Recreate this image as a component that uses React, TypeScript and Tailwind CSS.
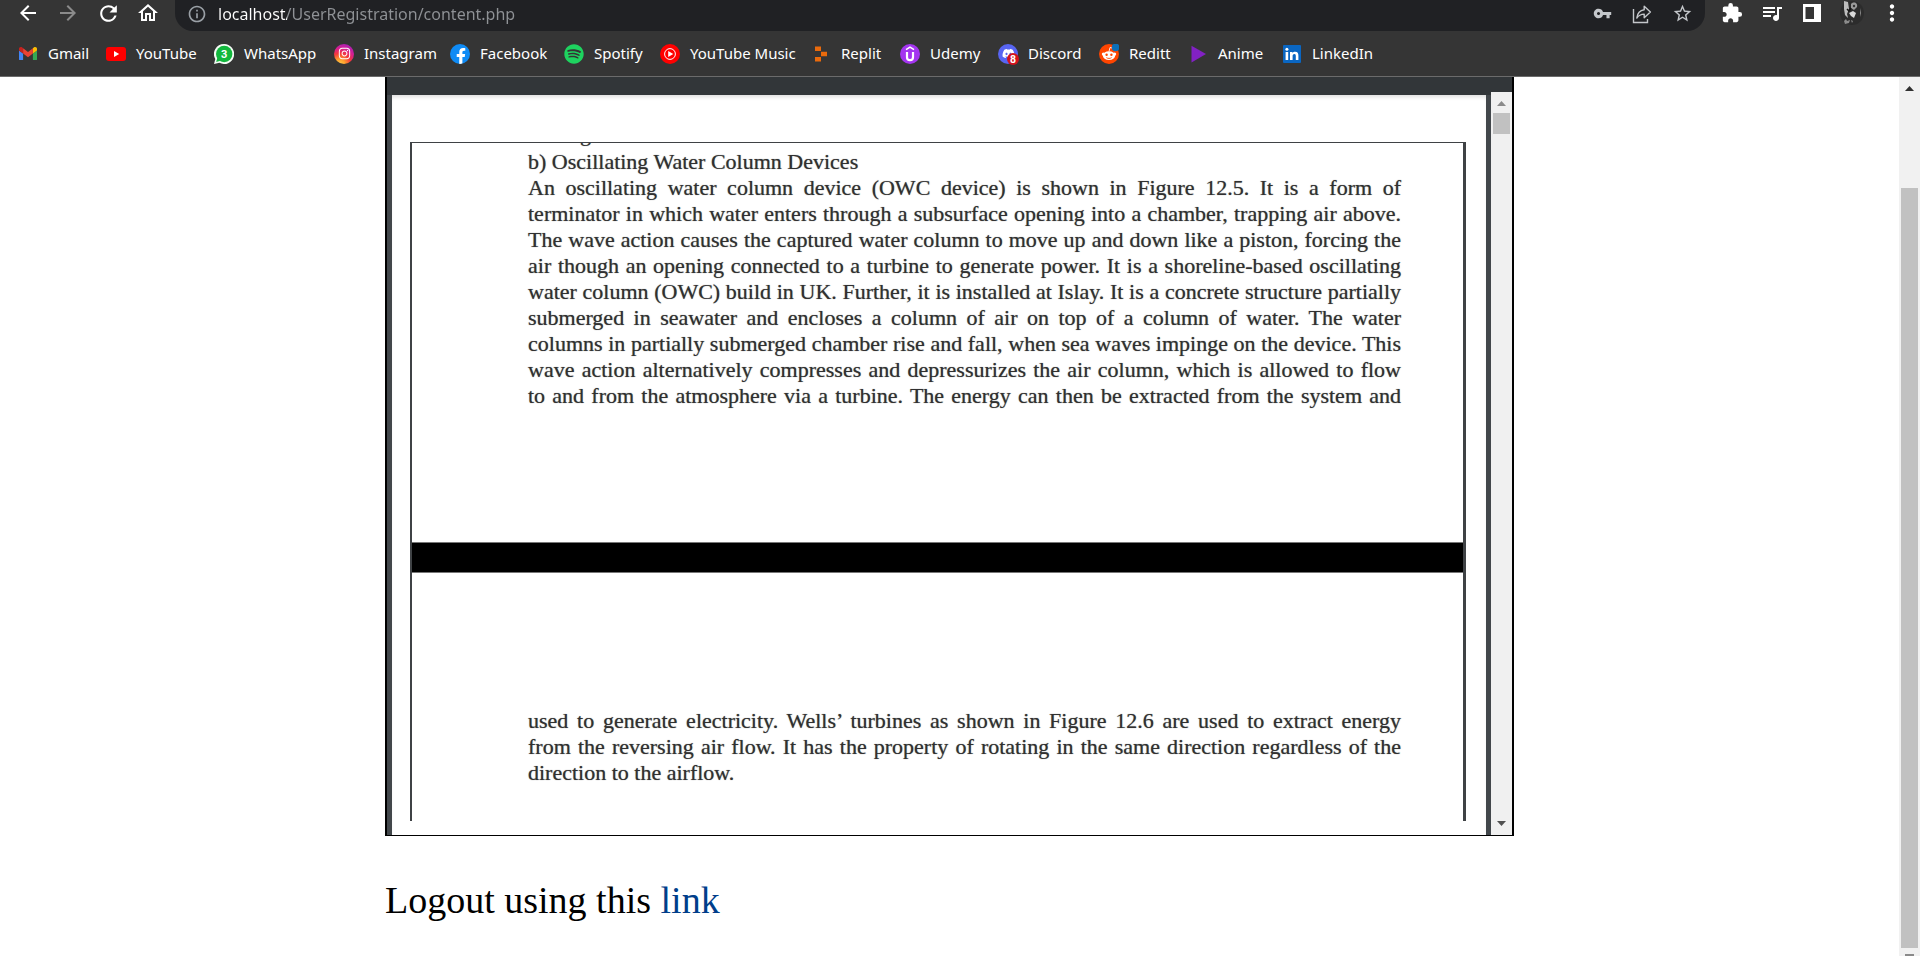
import React from "react";
import {
  MdArrowBack,
  MdArrowForward,
  MdRefresh,
  MdOutlineHome,
  MdInfoOutline,
  MdVpnKey,
  MdStarBorder,
  MdExtension,
  MdQueueMusic,
  MdMoreVert,
} from "react-icons/md";
import { FaSpotify, FaInstagram, FaDiscord, FaFacebookF } from "react-icons/fa";

const GmailIcon = () => (
  <svg viewBox="52 42 88 66" className="w-[18px]">
    <path fill="#4285f4" d="M58 108h14V74L52 59v43c0 3.32 2.69 6 6 6" />
    <path fill="#34a853" d="M120 108h14c3.32 0 6-2.69 6-6V59l-20 15" />
    <path fill="#fbbc04" d="M120 48v26l20-15v-8c0-7.42-8.47-11.65-14.4-7.2" />
    <path fill="#ea4335" d="M72 74V48l24 18 24-18v26L96 92" />
    <path fill="#c5221f" d="M52 51v8l20 15V48l-5.6-4.2c-5.94-4.45-14.4-.22-14.4 7.2" />
  </svg>
);

const YouTubeIcon = () => (
  <svg viewBox="0 0 20 20" className="size-5">
    <rect y="3" width="20" height="14" rx="3" fill="#f00" />
    <path d="M8 7l5.2 3L8 13z" fill="#fff" />
  </svg>
);

const WhatsAppIcon = () => (
  <svg viewBox="0 0 20 20" className="size-5">
    <path d="M10 0a10 10 0 1 1-4.6 18.8L0 20l1.3-5A10 10 0 0 1 10 0z" fill="#f4fbf5" />
    <circle cx="10.2" cy="10" r="8.2" fill="#12b83d" />
    <path d="M2.2 17.9l1.2-4.4 3 3.2z" fill="#12b83d" />
    <text x="10.2" y="14" textAnchor="middle" fontSize="11" fontWeight="700" fill="#fff" fontFamily="Roboto, sans-serif">3</text>
  </svg>
);

const InstagramIcon = () => (
  <span className="flex size-5 items-center justify-center rounded-full bg-[radial-gradient(circle_at_28%_105%,#ffd34e_0%,#fda02d_22%,#f4383c_45%,#d81f8f_65%,#8a1fd0_100%)] text-white">
    <FaInstagram size={13} />
  </span>
);

const FacebookIcon = () => (
  <span className="flex size-5 items-end justify-center overflow-hidden rounded-full bg-[#0f8bf5] pl-px text-white">
    <FaFacebookF size={16} />
  </span>
);

const SpotifyIcon = () => <FaSpotify size={20} color="#1ed35f" />;

const YouTubeMusicIcon = () => (
  <svg viewBox="0 0 20 20" className="size-5">
    <circle cx="10" cy="10" r="10" fill="#f00" />
    <circle cx="10" cy="10" r="5.4" fill="none" stroke="#fff" strokeWidth="1" />
    <path d="M8.2 7l5 3-5 3z" fill="#fff" />
  </svg>
);

const ReplitIcon = () => (
  <svg viewBox="0 0 20 20" className="size-5">
    <path d="M4 2.5h6v4.6H4zM10 7.7h6v4.6h-6zM4 12.9h6v4.6H4z" fill="#ea6a0c" />
  </svg>
);

const UdemyIcon = () => (
  <svg viewBox="0 0 20 20" className="size-5">
    <circle cx="10" cy="10" r="10" fill="#a435f0" />
    <path d="M6 5.6l4-2.5 4 2.5" fill="none" stroke="#fff" strokeWidth="1.5" />
    <path d="M7 8v5.200a3 3 0 0 0 6 0V8" fill="none" stroke="#fff" strokeWidth="2.200" />
  </svg>
);

const DiscordIcon = () => (
  <span className="relative flex size-5 items-center justify-center rounded-full bg-[#5865f2] text-white">
    <FaDiscord size={13} />
    <svg viewBox="0 0 12 12" className="absolute -right-px -bottom-px size-3">
      <circle cx="6" cy="6" r="6" fill="#d3121c" />
      <text x="6" y="9.800" textAnchor="middle" fontSize="10.500" fontWeight="700" fill="#fff" fontFamily="Roboto, sans-serif">8</text>
    </svg>
  </span>
);

const RedditIcon = () => (
  <svg viewBox="0 0 20 20" className="size-5">
    <circle cx="10" cy="10" r="10" fill="#ff4500" />
    <circle cx="4.300" cy="10" r="1.500" fill="#fff" />
    <circle cx="15.700" cy="10" r="1.500" fill="#fff" />
    <ellipse cx="10" cy="11.600" rx="6.200" ry="4.300" fill="#fff" />
    <path d="M10 7.500l1-4 3 .7" fill="none" stroke="#fff" strokeWidth="0.900" />
    <circle cx="7.600" cy="10.800" r="1.200" fill="#ff4500" />
    <circle cx="12.400" cy="10.800" r="1.200" fill="#ff4500" />
    <path d="M7.400 13.600c1.400 1.100 3.800 1.100 5.200 0" fill="none" stroke="#ff4500" strokeWidth="0.900" />
    <circle cx="16.600" cy="3.400" r="3.800" fill="#0c6fb8" />
  </svg>
);

const AnimeIcon = () => (
  <svg viewBox="0 0 20 20" className="size-5">
    <path d="M3.500 1.800L18 10 3.500 18.400z" fill="#8221c4" />
  </svg>
);

const LinkedInIcon = () => (
  <svg viewBox="0 0 20 20" className="size-5">
    <rect x="1" y="1" width="18" height="18" rx="1" fill="#0a66c2" />
    <path d="M3.600 8h2.600v8H3.600zM8 8h2.500v1.200c.5-.9 1.500-1.400 2.700-1.400 2.400 0 3.200 1.500 3.200 3.800V16h-2.600v-4c0-1.200-.3-2-1.400-2s-1.800.8-1.800 2v4H8z" fill="#fff" />
    <circle cx="4.900" cy="5.300" r="1.500" fill="#fff" />
  </svg>
);

const ShareIcon = () => (
  <svg viewBox="0 0 20 20" className="size-5" fill="none" stroke="currentColor" strokeWidth="1.400">
    <path d="M1.500 5v13.500h14V15" />
    <path d="M12.200 2.200v3.600C7.500 6.500 5.400 9.500 4.800 14c1.700-2.600 4-3.800 7.400-3.900v3.600L18.400 8z" strokeLinejoin="round" />
  </svg>
);

const PanelIcon = () => (
  <svg viewBox="0 0 18 18" className="size-[18px]" fill="currentColor">
    <path fillRule="evenodd" d="M0 0h18v18H0zM2.500 3v12H11V3z" />
  </svg>
);

const Avatar = () => (
  <svg viewBox="0 0 24 24" className="size-6">
    <circle cx="12" cy="12" r="12" fill="#2c2c2c" />
    <path d="M4 0l4 1 1 7-2 5 1 4-3-3-1-6z" fill="#bdbdbd" />
    <path d="M11 3c3-3 7-1 6 3l-3 3-3-2z" fill="#9a9a9a" />
    <circle cx="14" cy="5" r="1.200" fill="#333" />
    <path d="M9 12l4-2 3 2-2 5-3-2z" fill="#d8d8d8" />
    <path d="M4 20l2-2 1 2 3-1-1 3-4 1zM11 19l2 1-1 2zM20 7l1 5-1 4z" fill="#8c8c8c" />
    <path d="M7 8l2 2 2-3" stroke="#151515" strokeWidth="1.500" fill="none" />
  </svg>
);

const bookmarks: { label: string; Icon: () => React.ReactElement; width: string }[] = [
  { label: "Gmail", Icon: GmailIcon, width: "w-[88px]" },
  { label: "YouTube", Icon: YouTubeIcon, width: "w-[108px]" },
  { label: "WhatsApp", Icon: WhatsAppIcon, width: "w-[120px]" },
  { label: "Instagram", Icon: InstagramIcon, width: "w-[116px]" },
  { label: "Facebook", Icon: FacebookIcon, width: "w-[114px]" },
  { label: "Spotify", Icon: SpotifyIcon, width: "w-[96px]" },
  { label: "YouTube Music", Icon: YouTubeMusicIcon, width: "w-[151px]" },
  { label: "Replit", Icon: ReplitIcon, width: "w-[89px]" },
  { label: "Udemy", Icon: UdemyIcon, width: "w-[98px]" },
  { label: "Discord", Icon: DiscordIcon, width: "w-[101px]" },
  { label: "Reditt", Icon: RedditIcon, width: "w-[89px]" },
  { label: "Anime", Icon: AnimeIcon, width: "w-[94px]" },
  { label: "LinkedIn", Icon: LinkedInIcon, width: "w-[100px]" },
];

const firstPage = [
  "An oscillating water column device (OWC device) is shown in Figure 12.5. It is a form of",
  "terminator in which water enters through a subsurface opening into a chamber, trapping air above.",
  "The wave action causes the captured water column to move up and down like a piston, forcing the",
  "air though an opening connected to a turbine to generate power. It is a shoreline-based oscillating",
  "water column (OWC) build in UK. Further, it is installed at Islay. It is a concrete structure partially",
  "submerged in seawater and encloses a column of air on top of a column of water. The water",
  "columns in partially submerged chamber rise and fall, when sea waves impinge on the device. This",
  "wave action alternatively compresses and depressurizes the air column, which is allowed to flow",
  "to and from the atmosphere via a turbine. The energy can then be extracted from the system and",
];

const secondPage = [
  "used to generate electricity. Wells’ turbines as shown in Figure 12.6 are used to extract energy",
  "from the reversing air flow. It has the property of rotating in the same direction regardless of the",
];

function ToolButton({ label, className = "", children }: { label: string; className?: string; children: React.ReactNode }) {
  return (
    <button type="button" aria-label={label} className={`flex size-10 shrink-0 items-center justify-center ${className}`}>
      {children}
    </button>
  );
}

function Toolbar() {
  return (
    <header className="shrink-0 border-b border-[#6b6b6b] bg-[#353535] font-['Noto_Sans','Open_Sans',sans-serif] text-white">
      <div className="flex h-[31px] items-start overflow-hidden pl-2">
        <nav aria-label="Navigation" className="-mt-[7px] flex">
          <ToolButton label="Back"><MdArrowBack size={24} /></ToolButton>
          <ToolButton label="Forward" className="text-[#8b8b8b]"><MdArrowForward size={24} /></ToolButton>
          <ToolButton label="Reload"><MdRefresh size={25} /></ToolButton>
          <ToolButton label="Home"><MdOutlineHome size={24} /></ToolButton>
        </nav>
        <div className="-mt-1 ml-[7px] flex h-[35px] flex-1 items-center rounded-b-[18px] bg-[#202124] pl-3 text-[#9aa0a6]">
          <MdInfoOutline size={20} className="shrink-0" />
          <input
            aria-label="Address"
            defaultValue="localhost/UserRegistration/content.php"
            className="ml-[11px] min-w-0 flex-1 bg-[linear-gradient(90deg,#ffffff_69px,#8f9296_69px)] bg-clip-text text-base text-transparent outline-none"
          />
          <div className="flex shrink-0 items-center pr-[3px] text-[#c4c7cb]">
            <ToolButton label="Passwords"><MdVpnKey size={19} /></ToolButton>
            <ToolButton label="Share"><ShareIcon /></ToolButton>
            <ToolButton label="Bookmark this page"><MdStarBorder size={21} /></ToolButton>
          </div>
        </div>
        <div className="-mt-[7px] flex pr-2 pl-[7px]">
          <ToolButton label="Extensions"><MdExtension size={22} /></ToolButton>
          <ToolButton label="Media"><MdQueueMusic size={24} /></ToolButton>
          <ToolButton label="Side panel"><PanelIcon /></ToolButton>
          <ToolButton label="Profile"><Avatar /></ToolButton>
          <ToolButton label="Menu"><MdMoreVert size={26} /></ToolButton>
        </div>
      </div>
      <nav aria-label="Bookmarks" className="flex h-[45px] items-center pl-[18px]">
        {bookmarks.map(({ label, Icon, width }) => (
          <a key={label} href="#" className={`flex h-9 shrink-0 items-center gap-[10px] text-[15px] whitespace-nowrap ${width}`}>
            <span className="flex w-5 shrink-0 justify-center"><Icon /></span>
            {label}
          </a>
        ))}
      </nav>
    </header>
  );
}

function Arrow({ down = false, className }: { down?: boolean; className: string }) {
  return (
    <svg viewBox="0 0 9 5" className={`h-[5px] w-[9px] ${className}`} fill="currentColor">
      <path d={down ? "M0 0h9L4.500 5z" : "M0 5h9L4.500 0z"} />
    </svg>
  );
}

function DocumentViewer() {
  return (
    <section
      aria-label="Document"
      className="flex flex-col border-x-2 border-b border-black bg-[#42474b]"
    >
      <div className="h-[15px] bg-[#323639]" />
      <div className="flex">
        <div className="flex-1 border-t-[3px] border-[#323639] pr-[5px] pl-[5px]">
          <article className="bg-white pt-[47px] pr-5 pb-[14px] pl-[18px] font-['Liberation_Serif',serif] text-[22px] leading-[26px] text-[#303030] shadow-[inset_0_4px_4px_-2px_#ddd] [text-shadow:0_0_1px_#777]">
            <div className="border-t border-r-[3px] border-l-2 border-[#3f4245]">
              <div className="h-[399px] overflow-hidden pr-[62px] pl-[116px]">
                <div className="mb-[2px] flex h-[4px] items-end overflow-hidden pl-[52px]">g</div>
                <h2>b) Oscillating Water Column Devices</h2>
                {firstPage.map((line) => (
                  <p key={line} className="whitespace-nowrap [text-align-last:justify]">{line}</p>
                ))}
              </div>
              <div className="h-[31px] border-y border-[#777] bg-black" />
              <div className="h-[248px] pt-[135px] pr-[62px] pl-[116px]">
                {secondPage.map((line) => (
                  <p key={line} className="whitespace-nowrap [text-align-last:justify]">{line}</p>
                ))}
                <p>direction to the airflow.</p>
              </div>
            </div>
          </article>
        </div>
        <div className="flex w-[21px] flex-col items-center bg-[#f0f0f0]">
          <Arrow className="mt-[9px] text-[#8a8a8a]" />
          <div className="mt-[7px] h-[21px] w-[17px] bg-[#c1c1c1]" />
          <Arrow down className="mt-auto mb-[9px] text-[#505050]" />
        </div>
      </div>
    </section>
  );
}

export default function App() {
  return (
    <div className="flex h-screen flex-col overflow-hidden bg-white">
      <Toolbar />
      <div className="flex min-h-0 flex-1">
        <main className="flex min-w-0 flex-1 justify-center overflow-hidden">
          <div className="w-full max-w-[1129px]">
            <DocumentViewer />
            <p className="mt-10 font-['Liberation_Serif',serif] text-[38px] leading-[48px] text-black">
              Logout using this <a href="#" className="text-[#003e8a]">link</a>
            </p>
          </div>
        </main>
        <div className="flex w-[21px] shrink-0 flex-col items-center bg-[#f1f1f1]">
          <Arrow className="mt-[9px] shrink-0 text-[#303030]" />
          <div className="mt-[97px] mb-[6px] w-[17px] flex-1 bg-[#c1c1c1]" />
          <div className="h-[2px] w-[9px] shrink-0 bg-[#8a8a8a]" />
        </div>
      </div>
    </div>
  );
}
